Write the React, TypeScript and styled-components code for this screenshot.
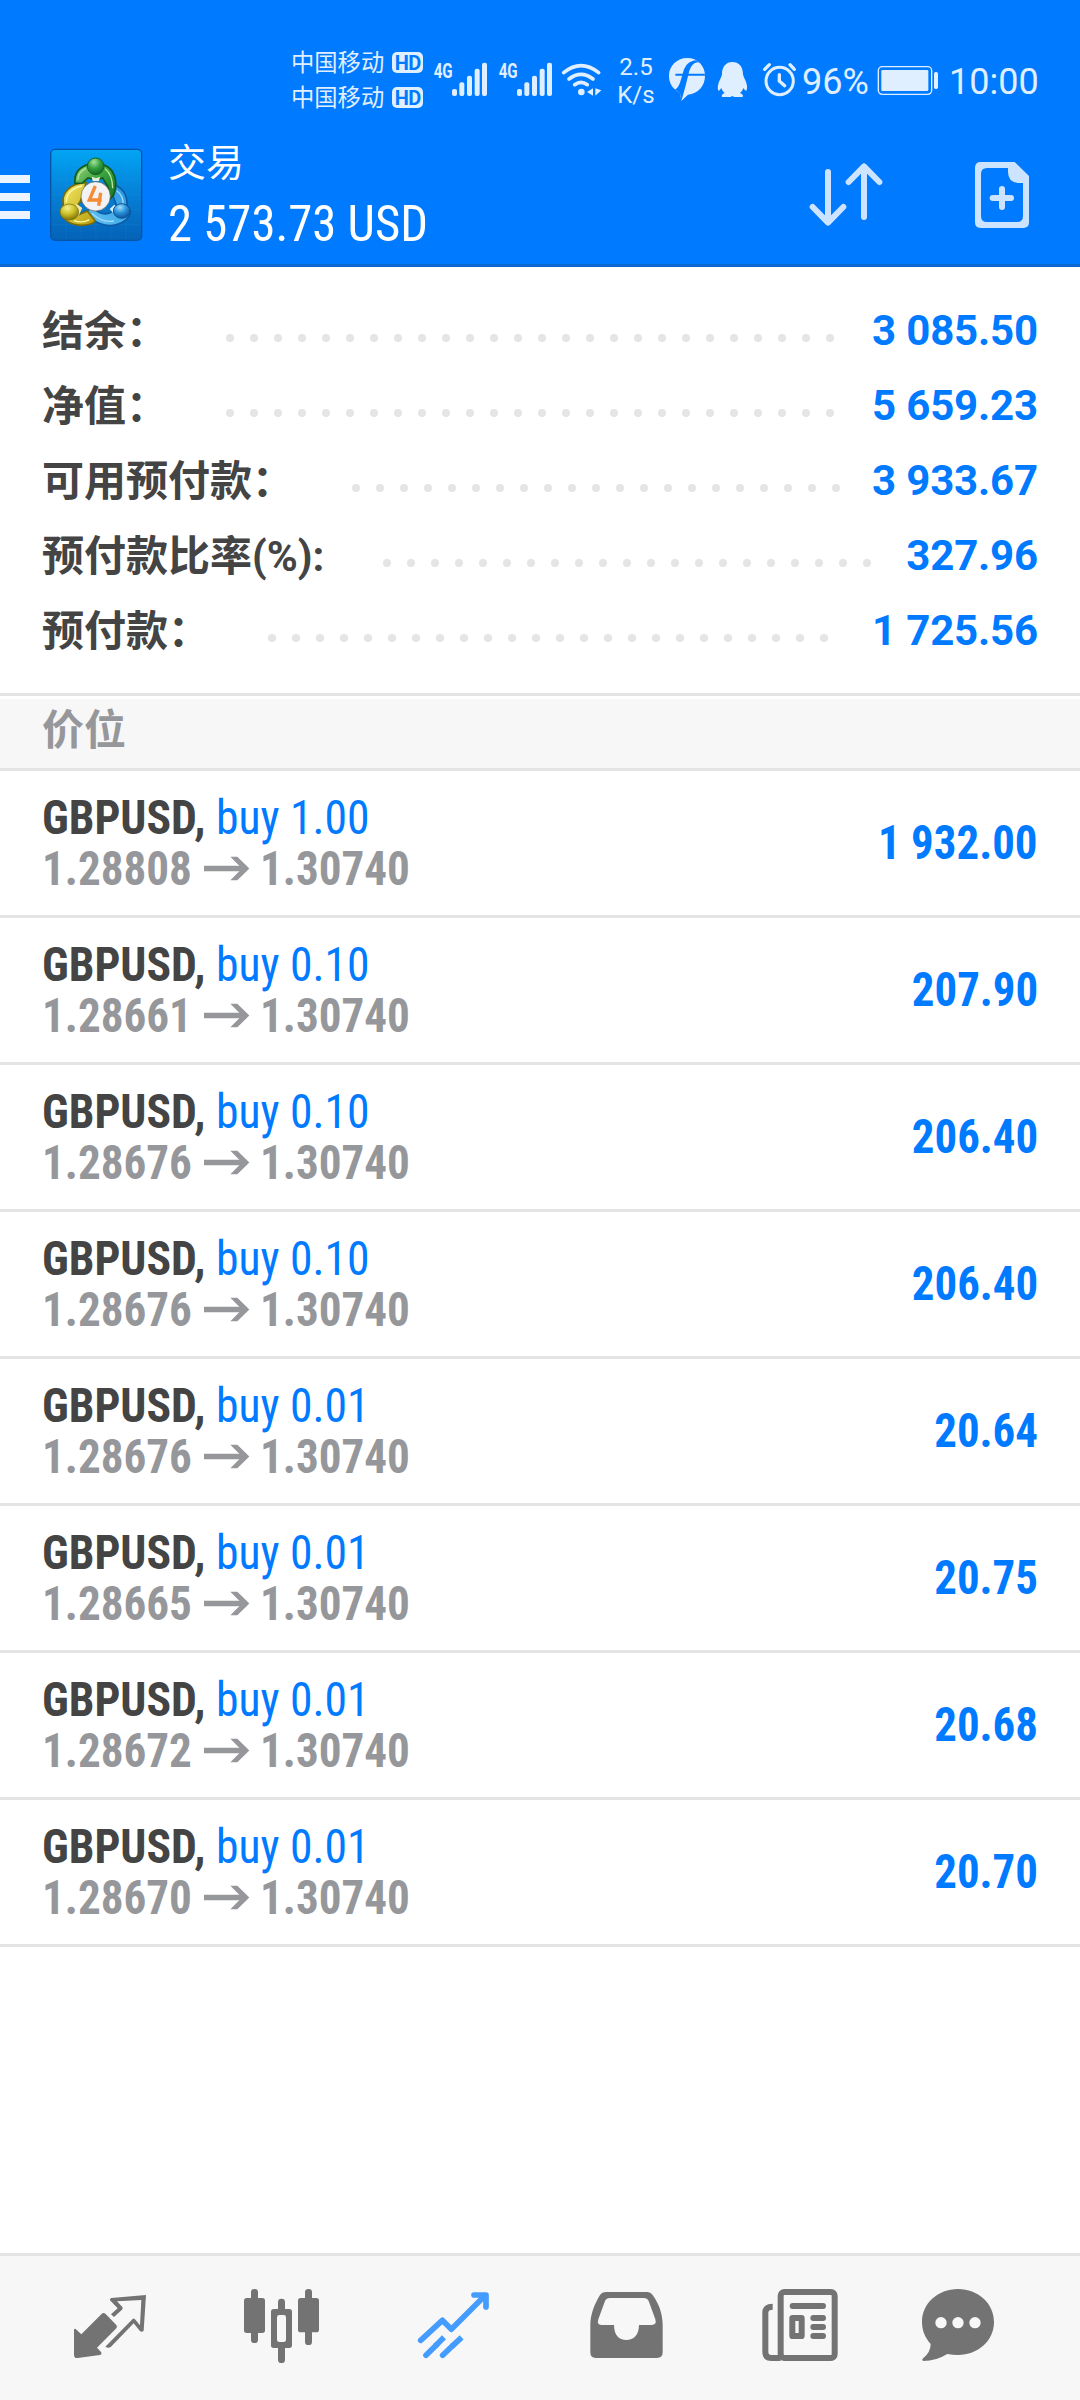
import React from "react";
import styled, { createGlobalStyle } from "styled-components";

const GlobalStyle = createGlobalStyle`
  * { box-sizing: border-box; }
  body { margin: 0; background: #fff; font-family: Roboto, "Noto Sans CJK SC", sans-serif; }
  svg { display: block; flex: none; }
`;

const BLUE = "#007aff";
const STATUS = "#e0efff";
const ACTION = "#cce4ff";
const ICON = "#737373";

const Screen = styled.div`
  width: 1080px; height: 2400px; display: flex; flex-direction: column; background: #fff; overflow: hidden;
`;
const Header = styled.header`
  height: 267px; flex: none; background: ${BLUE}; border-bottom: 3px solid #0a68cf; display: flex; flex-direction: column;
`;
const StatusBar = styled.div`
  height: 120px; padding-left: 291px; display: flex; color: ${STATUS};
`;
const Carriers = styled.div`
  width: 139px; padding-top: 46px; display: flex; flex-direction: column;
`;
const Carrier = styled.div`
  height: 35px; display: flex; align-items: center; gap: 8px; font-size: 23.3px; line-height: 35px; white-space: nowrap;
`;
const HdBadge = styled.span`
  width: 31px; height: 21px; margin-bottom: 2px; border-radius: 5px; background: ${STATUS}; color: ${BLUE};
  font-size: 20px; font-weight: 700; line-height: 22px; text-align: center; letter-spacing: -0.5px;
`;
const Speed = styled.div`
  width: 62px; padding-top: 53px; display: flex; flex-direction: column; align-items: center;
  font-size: 24px; line-height: 28px;
`;
const StatusText = styled.div<{ $width: number; $indent: number }>`
  width: ${(p) => p.$width}px; padding: 60px 0 0 ${(p) => p.$indent}px; font-size: 36px; line-height: 44px; white-space: nowrap;
`;
const AppBar = styled.div`
  height: 144px; display: flex;
`;
const Titles = styled.div`
  flex: 1; padding: 23px 0 0 23px; color: #fff; display: flex; flex-direction: column;
`;
const Title = styled.div`
  font-size: 38px; line-height: 40px; height: 40px;
`;
const Condensed = styled.span<{ $scale: number; $origin?: string }>`
  display: block; width: max-content; white-space: pre; font-family: "Roboto Condensed", Roboto, sans-serif; font-stretch: 75%;
  transform: scaleX(${(p) => p.$scale}); transform-origin: ${(p) => p.$origin ?? "left"} center;
`;
const Amount = styled.div`
  margin-top: 11px; font-size: 50px; line-height: 60px;
`;

const Summary = styled.section`
  padding: 26px 42px 25px 42px; flex: none; display: flex; flex-direction: column;
`;
const SummaryRow = styled.div`
  height: 75px; display: flex; line-height: 75px; font-size: 42px; font-weight: 700; white-space: nowrap;
`;
const Label = styled.div<{ $width: number }>`
  width: ${(p) => p.$width}px; padding-top: 1px; color: #444;
`;
const Dots = styled.div`
  flex: 1; padding: 41px 0 0 58px; display: flex; gap: 16px;
`;
const Dot = styled.i`
  width: 8px; height: 8px; border-radius: 50%; background: #e5e5e5; flex: none;
`;
const Value = styled.div`
  color: ${BLUE}; letter-spacing: -0.15px;
`;

const SectionHead = styled.div`
  height: 78px; flex: none; border: solid #e4e4e4; border-width: 3px 0; padding: 3px 0 0;
`;
const SectionTitle = styled.div`
  height: 69px; background: #f7f7f7; padding: 2px 42px 0; color: #96979b; font-size: 42px; font-weight: 700; line-height: 60px;
`;
const Position = styled.div`
  height: 147px; flex: none; border-bottom: 3px solid #e4e4e4; padding: 21px 42px 21px 42px;
  display: flex; justify-content: space-between; align-items: flex-start; font-size: 48px; line-height: 51px;
`;
const Deal = styled.div`
  display: flex; flex-direction: column;
`;
const DealLine = styled.div`
  height: 51px; display: flex; color: #444;
`;
const Symbol = styled.div`
  width: 174px; font-weight: 700;
`;
const Side = styled.div`
  color: ${BLUE};
`;
const Price = styled.div<{ $width: number }>`
  width: ${(p) => p.$width}px; font-weight: 700; color: #96979b;
`;
const Profit = styled.div`
  padding-top: 25px; color: ${BLUE}; font-weight: 700;
`;
const Spacer = styled.div`
  flex: 1;
`;
const Nav = styled.nav`
  height: 147px; flex: none; border-top: 3px solid #e4e4e4; background: #f7f7f7; padding-left: 24px; display: flex;
`;

const Signal = () => (
  <svg width="65" height="120" viewBox="450 -120 195 360" fill={STATUS}>
    <text x="461" y="113" fontFamily="Roboto" fontWeight="700" fontSize="60" textLength="57" lengthAdjust="spacingAndGlyphs">4G</text>
    <rect x="516" y="147" width="15" height="21" rx="6" />
    <rect x="538" y="127" width="15" height="41" rx="6" />
    <rect x="561" y="107" width="15" height="61" rx="6" />
    <rect x="584" y="86" width="15" height="82" rx="6" />
    <rect x="606" y="68" width="15" height="100" rx="6" />
  </svg>
);

const Wifi = () => (
  <svg width="45" height="120" viewBox="840 -120 135 360">
    <g fill="none" stroke={STATUS} strokeWidth="11" strokeLinecap="round">
      <path d="M851 98Q903 56 956 98" />
      <path d="M867 117Q903 89 939 117" />
      <path d="M884 134Q903 120 922 134" />
    </g>
    <circle cx="904" cy="156" r="10" fill={STATUS} />
    <path d="M939 145v22l-18-11zM946 145v22l18-16z" fill={STATUS} />
  </svg>
);

const NotifyF = () => (
  <svg width="43" height="120" viewBox="21 -120 129 360">
    <defs>
      <clipPath id="bubble">
        <path d="M82 54C112 54 135 77 135 107C135 138 114 160 84 164L64 183L60 160L46 149C32 138 27 122 27 107C27 77 52 54 82 54Z" />
      </clipPath>
    </defs>
    <g clipPath="url(#bubble)">
      <path d="M20 50H140V190H20Z" fill={STATUS} />
      <path d="M132 76Q122 66 112 67Q96 69 88 92L76 140L64 183H44V149Q54 144 60 128L72 88Q82 60 118 60Z" fill={BLUE} />
      <path d="M46 104H140" stroke={BLUE} strokeWidth="6" />
    </g>
  </svg>
);

const Penguin = () => (
  <svg width="45" height="120" viewBox="150 -120 135 360" fill={STATUS}>
    <path d="M217 66C237 66 249 80 249 103C250 110 253 114 256 121C262 135 263 145 259 152C256 153 253 148 250 144C248 151 244 156 240 159C250 163 252 171 245 171H223L217 168L211 171H189C183 171 184 163 194 159C190 156 186 151 184 144C181 149 177 153 175 152C172 145 173 134 179 121C182 114 185 110 186 103C186 80 198 66 217 66Z" />
  </svg>
);

const Alarm = () => (
  <svg width="45" height="120" viewBox="285 -120 135 360" fill="none" stroke={STATUS} strokeWidth="9" strokeLinecap="round">
    <circle cx="359" cy="123" r="41" />
    <path d="M358 104V123L374 137" strokeWidth="10" />
    <path d="M314 88L328 74M390 74L403 88" strokeWidth="10" />
  </svg>
);

const Battery = () => (
  <svg width="70" height="120" viewBox="645 -120 210 360">
    <rect x="655" y="80" width="160" height="83" rx="12" fill="none" stroke={STATUS} strokeWidth="4" />
    <rect x="664" y="90" width="141" height="63" rx="4" fill={STATUS} />
    <rect x="822" y="96" width="12" height="51" rx="5" fill={STATUS} />
  </svg>
);

const Menu = () => (
  <svg width="30" height="144" viewBox="0 -30 90 432" fill="#ecf5ff">
    <path d="M0 135h90v24H0zM0 189h90v24H0zM0 243h90v24H0z" />
  </svg>
);

const LogoDrawing = styled.svg`
  margin-left: 17px;
`;

const Logo = () => (
  <LogoDrawing width="98" height="144" viewBox="141 -30 294 432">
    <defs>
      <linearGradient id="tile" x1="0" y1="0" x2="0" y2="1">
        <stop offset="0" stopColor="#02a5f4" />
        <stop offset="0.5" stopColor="#067fd6" />
        <stop offset="1" stopColor="#0462b6" />
      </linearGradient>
      <linearGradient id="green" x1="0" y1="0" x2="1" y2="1">
        <stop offset="0" stopColor="#9bd47c" />
        <stop offset="0.5" stopColor="#38a03c" />
        <stop offset="1" stopColor="#167427" />
      </linearGradient>
      <linearGradient id="yellow" x1="0" y1="0" x2="1" y2="1">
        <stop offset="0" stopColor="#f5ec67" />
        <stop offset="1" stopColor="#b79c0b" />
      </linearGradient>
      <linearGradient id="sky" x1="1" y1="0" x2="0" y2="1">
        <stop offset="0" stopColor="#2793df" />
        <stop offset="1" stopColor="#62c5f4" />
      </linearGradient>
      <radialGradient id="greenBall" cx="0.4" cy="0.25" r="0.75">
        <stop offset="0" stopColor="#a5e39b" />
        <stop offset="0.5" stopColor="#36a142" />
        <stop offset="1" stopColor="#126a25" />
      </radialGradient>
      <radialGradient id="yellowBall" cx="0.4" cy="0.25" r="0.75">
        <stop offset="0" stopColor="#f6f08c" />
        <stop offset="0.5" stopColor="#cfc22c" />
        <stop offset="1" stopColor="#7f7508" />
      </radialGradient>
      <radialGradient id="blueBall" cx="0.4" cy="0.25" r="0.75">
        <stop offset="0" stopColor="#a4defb" />
        <stop offset="0.5" stopColor="#2b93dc" />
        <stop offset="1" stopColor="#0a559e" />
      </radialGradient>
    </defs>
    <rect x="152" y="58" width="273" height="273" rx="13" fill="url(#tile)" stroke="#0554a8" strokeWidth="4" />
    <path d="M198 60V328M243 60V328M288 60V328M333 60V328M378 60V328M154 104H422M154 149H422M154 194H422M154 239H422M154 284H422" stroke="#35b0f2" strokeOpacity="0.16" strokeWidth="2" />
    <path d="M345 166C368 174 383 196 381 228L392 244C389 266 373 277 350 284C318 293 278 279 256 244L282 233C300 257 325 254 338 244L348 222L340 200Z" fill="url(#sky)" stroke="#0c5ba5" strokeWidth="5" />
    <path d="M350 182Q372 198 369 226M276 250Q305 280 342 273" fill="none" stroke="#a2dcf8" strokeWidth="4" />
    <path d="M258 158C211 160 183 187 190 224L184 244C185 266 208 285 242 286C264 286 278 282 286 273L262 243L235 255L232 226L240 216L250 190Z" fill="url(#yellow)" stroke="#796b09" strokeWidth="5" />
    <path d="M246 168Q199 178 199 217M222 272Q248 281 268 269" fill="none" stroke="#fbf8a7" strokeWidth="4" />
    <path d="M263 104C238 112 222 131 225 160L247 159L264 144L288 150L308 144L316 158C329 173 328 190 329 208C347 195 354 157 340 130C333 116 322 108 309 104Z" fill="url(#green)" stroke="#135c20" strokeWidth="5" />
    <path d="M258 115Q234 126 234 150M315 116Q337 132 338 175" fill="none" stroke="#b4e6a0" strokeWidth="4" />
    <path d="M275 140L288 145L300 140L297 153H278Z" fill="#e3efda" />
    <circle cx="287" cy="109" r="25" fill="url(#greenBall)" stroke="#15651f" strokeWidth="3" />
    <path d="M229 221L247 234L236 257L223 252Z" fill="#f2e9a0" />
    <ellipse cx="208" cy="246" rx="28" ry="24" fill="url(#yellowBall)" stroke="#756b0b" strokeWidth="2" />
    <path d="M329 237L343 224L352 232L344 254Z" fill="#d8effb" />
    <ellipse cx="365" cy="243" rx="25" ry="22" fill="url(#blueBall)" stroke="#0b5597" strokeWidth="3" />
    <circle cx="287" cy="199" r="44" fill="#f3f2f4" stroke="#585445" strokeOpacity="0.6" strokeWidth="3" />
    <path d="M286 168L268 210H305M302 188L296 227" fill="none" stroke="#f58b32" strokeWidth="10" />
  </LogoDrawing>
);

const SortIcon = () => (
  <svg width="100" height="144" viewBox="45 -60 300 432" fill="none" stroke={ACTION} strokeWidth="18" strokeLinecap="round" strokeLinejoin="round">
    <path d="M144 96V246M98 201L144 248L190 201" />
    <path d="M252 231V81M206 126L252 79L298 126" />
  </svg>
);

const NewOrderDrawing = styled.svg`
  margin: 0 40px 0 70px;
`;

const NewOrderIcon = () => (
  <NewOrderDrawing width="75" height="144" viewBox="555 -60 225 432">
    <path fillRule="evenodd" fill={ACTION} d="M602 66H704L747 108V247Q747 264 730 264H602Q585 264 585 247V83Q585 66 602 66ZM621 84Q603 84 603 102V228Q603 246 621 246H711Q729 246 729 228V129H715Q684 127 684 96V84Z" />
    <path d="M666 147V201M638 174H693" stroke={ACTION} strokeWidth="18" strokeLinecap="round" />
  </NewOrderDrawing>
);

const QuotesIcon = () => (
  <svg width="172" height="144" viewBox="-48 48 516 432">
    <path fill={ICON} d="M102 268Q104 265 107 267L124 283L184 223Q190 216 197 222L229 255Q233 260 229 265L171 323L183 336Q187 343 180 345L113 354Q102 355 102 344Z" />
    <path fill={ICON} fillRule="evenodd" d="M214 174L318 165L311 272Q305 278 299 272L281 250L213 320Q205 326 196 320L278 237Q281 233 285 238L300 256L304 180L231 184L247 201Q250 205 246 209L222 231L213 223L233 205L210 181Q208 176 214 174Z" />
  </svg>
);

const ChartIcon = () => (
  <svg width="172" height="144" viewBox="468 48 516 432" fill={ICON}>
    <rect x="633" y="147" width="21" height="162" rx="10" />
    <rect x="612" y="174" width="63" height="105" rx="8" />
    <rect x="795" y="147" width="21" height="168" rx="10" />
    <rect x="774" y="174" width="63" height="103" rx="8" />
    <rect x="714" y="176" width="21" height="60" rx="10" />
    <rect x="714" y="300" width="21" height="69" rx="10" />
    <rect x="693" y="207" width="63" height="117" rx="8" />
    <rect x="711" y="225" width="27" height="81" rx="7" fill="#f7f7f7" />
  </svg>
);

const TradeIcon = () => (
  <svg width="172" height="144" viewBox="984 48 516 432" fill="none" stroke="#459cff" strokeWidth="17" strokeLinecap="round" strokeLinejoin="round">
    <path d="M1142 301L1207 241L1234 268L1336 166M1302 165H1338V201" />
    <path d="M1158 346L1190 314M1208 346L1240 315" />
    <path d="M1185 319L1212 292M1235 320L1265 292" strokeLinecap="butt" />
  </svg>
);

const InboxIcon = () => (
  <svg width="172" height="144" viewBox="-60 48 516 432">
    <path fill={ICON} fillRule="evenodd" d="M138 156H262Q272 156 278 165C298 193 308 224 308 255V337Q308 354 291 354H107Q91 354 91 337V255C91 224 103 193 120 165Q126 156 138 156ZM150 174Q139 174 135 183L115 238Q110 255 124 255H162C162 285 177 300 199 300C221 300 237 285 237 255H275Q291 255 286 238L266 183Q262 174 251 174Z" />
  </svg>
);

const NewsIcon = () => (
  <svg width="172" height="144" viewBox="456 48 516 432" fill="none" stroke={ICON} strokeWidth="18">
    <rect x="662" y="156" width="162" height="198" rx="11" />
    <path d="M638 200Q616 200 616 218V336Q616 354 634 354H662" />
    <path d="M698 198H789M760 234H789M760 261H789M760 288H789" strokeLinecap="round" />
    <rect x="697" y="234" width="28" height="54" rx="1" strokeLinejoin="round" />
  </svg>
);

const ChatIcon = () => (
  <svg width="172" height="144" viewBox="972 48 516 432">
    <path fill={ICON} d="M1194 147C1254 147 1302 190 1302 246C1302 302 1254 345 1194 345Q1178 345 1162 342Q1128 363 1090 363Q1084 360 1088 356Q1112 338 1112 312C1094 292 1086 270 1086 246C1086 190 1134 147 1194 147Z" />
    <g fill="#f7f7f7">
      <circle cx="1143" cy="248" r="17" />
      <circle cx="1194" cy="248" r="17" />
      <circle cx="1245" cy="248" r="17" />
    </g>
  </svg>
);

const ArrowDrawing = styled.svg`
  margin-right: 6px;
`;

const Arrow = () => (
  <ArrowDrawing width="58" height="51" viewBox="588 487 174 153">
    <path d="M612 563.5H740" stroke="#96979b" strokeWidth="17" />
    <path d="M691 528H712L748 563.5L712 599H691L726 563.5Z" fill="#96979b" />
  </ArrowDrawing>
);

const summary = [
  { label: "结余：", width: 126, dots: 26, value: "3 085.50" },
  { label: "净值：", width: 126, dots: 26, value: "5 659.23" },
  { label: "可用预付款：", width: 252, dots: 21, value: "3 933.67" },
  { label: "预付款比率(%):", width: 283, dots: 21, value: "327.96" },
  { label: "预付款：", width: 168, dots: 24, value: "1 725.56" },
];

const positions = [
  { lots: "1.00", open: "1.28808", profit: "1 932.00" },
  { lots: "0.10", open: "1.28661", profit: "207.90" },
  { lots: "0.10", open: "1.28676", profit: "206.40" },
  { lots: "0.10", open: "1.28676", profit: "206.40" },
  { lots: "0.01", open: "1.28676", profit: "20.64" },
  { lots: "0.01", open: "1.28665", profit: "20.75" },
  { lots: "0.01", open: "1.28672", profit: "20.68" },
  { lots: "0.01", open: "1.28670", profit: "20.70" },
];

export default function App() {
  return (
    <Screen>
      <GlobalStyle />
      <Header>
        <StatusBar>
          <Carriers>
            <Carrier>中国移动<HdBadge>HD</HdBadge></Carrier>
            <Carrier>中国移动<HdBadge>HD</HdBadge></Carrier>
          </Carriers>
          <Signal />
          <Signal />
          <Wifi />
          <Speed><span>2.5</span><span>K/s</span></Speed>
          <NotifyF />
          <Penguin />
          <Alarm />
          <StatusText $width={75} $indent={2}>96%</StatusText>
          <Battery />
          <StatusText $width={95} $indent={4}>10:00</StatusText>
        </StatusBar>
        <AppBar>
          <Menu />
          <Logo />
          <Titles>
            <Title>交易</Title>
            <Amount><Condensed $scale={0.975}>2 573.73 USD</Condensed></Amount>
          </Titles>
          <SortIcon />
          <NewOrderIcon />
        </AppBar>
      </Header>
      <Summary>
        {summary.map((row) => (
          <SummaryRow key={row.label}>
            <Label $width={row.width}>{row.label}</Label>
            <Dots>{Array.from({ length: row.dots }, (_, i) => <Dot key={i} />)}</Dots>
            <Value>{row.value}</Value>
          </SummaryRow>
        ))}
      </Summary>
      <SectionHead><SectionTitle>价位</SectionTitle></SectionHead>
      {positions.map((p, i) => (
        <Position key={i}>
          <Deal>
            <DealLine>
              <Symbol><Condensed $scale={0.952}>GBPUSD,</Condensed></Symbol>
              <Side><Condensed $scale={0.95}>buy {p.lots}</Condensed></Side>
            </DealLine>
            <DealLine>
              <Price $width={154}><Condensed $scale={0.94}>{p.open}</Condensed></Price>
              <Arrow />
              <Price $width={150}><Condensed $scale={0.94}>1.30740</Condensed></Price>
            </DealLine>
          </Deal>
          <Profit><Condensed $scale={0.935} $origin="right">{p.profit}</Condensed></Profit>
        </Position>
      ))}
      <Spacer />
      <Nav>
        <QuotesIcon />
        <ChartIcon />
        <TradeIcon />
        <InboxIcon />
        <NewsIcon />
        <ChatIcon />
      </Nav>
    </Screen>
  );
}
